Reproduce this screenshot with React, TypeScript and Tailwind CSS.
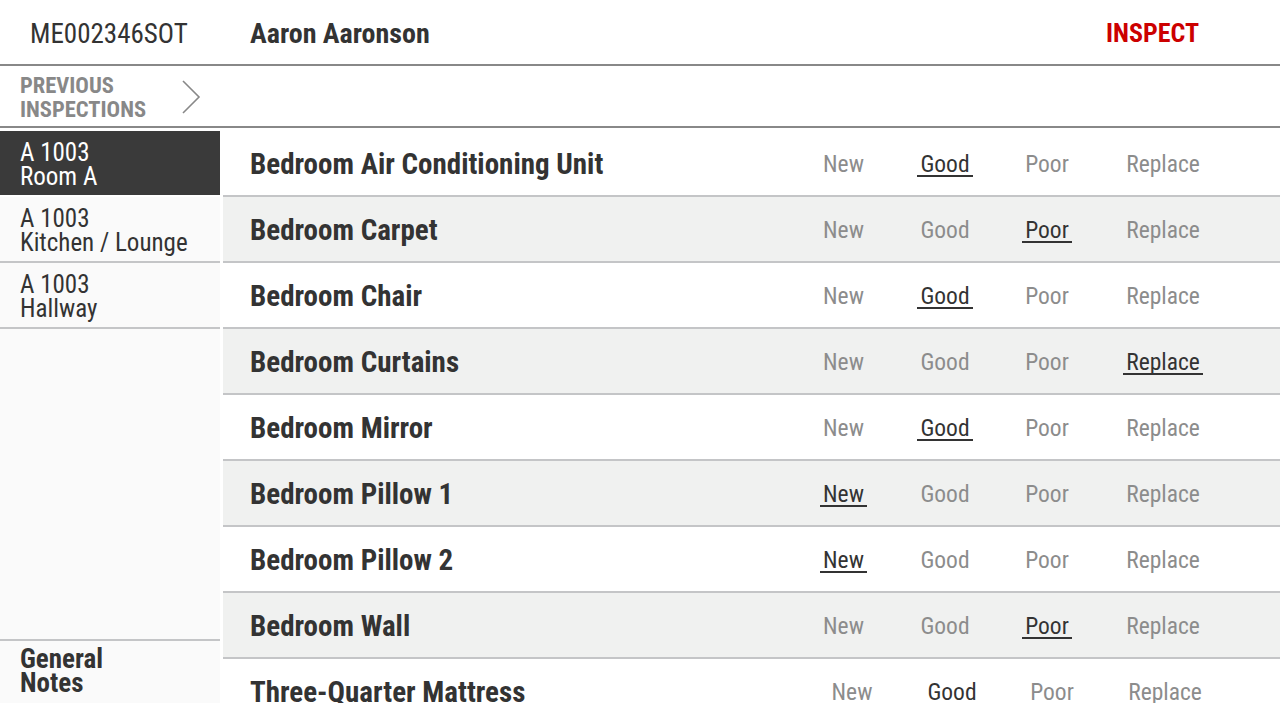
import React from 'react';

const FONT = '"Roboto Condensed", "Liberation Sans Narrow", "DejaVu Sans Condensed", "Liberation Sans", sans-serif';

const OPTIONS = ['New', 'Good', 'Poor', 'Replace'];

const items = [
  { name: 'Bedroom Air Conditioning Unit', value: 'Good' },
  { name: 'Bedroom Carpet', value: 'Poor' },
  { name: 'Bedroom Chair', value: 'Good' },
  { name: 'Bedroom Curtains', value: 'Replace' },
  { name: 'Bedroom Mirror', value: 'Good' },
  { name: 'Bedroom Pillow 1', value: 'New' },
  { name: 'Bedroom Pillow 2', value: 'New' },
  { name: 'Bedroom Wall', value: 'Poor' },
  { name: 'Three-Quarter Mattress', value: 'Good' },
];

const rooms = [
  { code: 'A 1003', name: 'Room A', active: true },
  { code: 'A 1003', name: 'Kitchen / Lounge' },
  { code: 'A 1003', name: 'Hallway' },
];

const WIDTHS = ['w-[101px]', 'w-[102px]', 'w-[102px]', 'w-[130px]'];
const WIDTHS_LAST = ['w-[100px]', 'w-[100px]', 'w-[100px]', 'w-[126px]'];

export default function App() {
  return (
    <div className="h-screen overflow-hidden bg-white text-[#333] flex flex-col" style={{ fontFamily: FONT }}>
      {/* Header */}
      <header className="h-[66px] shrink-0 flex items-center pt-[3px] border-b-2 border-[#888]">
        <span className="w-[250px] pl-[30px] text-[27px] mt-[2px]">ME002346SOT</span>
        <span className="text-[28px] font-bold">Aaron Aaronson</span>
        <span className="ml-auto mr-[81px] text-[26px] font-bold text-[#cc0000]">INSPECT</span>
      </header>

      {/* Previous inspections */}
      <div className="h-[62px] shrink-0 flex items-center border-b-2 border-[#888]">
        <div className="pl-[20px] w-[181px] mt-[1px] text-[22.5px] leading-[24px] font-bold text-[#888] uppercase">
          Previous<br />Inspections
        </div>
        <svg width="20" height="36" viewBox="0 0 20 36" className="mt-[2px]">
          <path d="M2 2 L18 18 L2 34" fill="none" stroke="#888" strokeWidth="1.6" />
        </svg>
      </div>

      <div className="flex flex-1 min-h-0 pt-[3px]">
        {/* Sidebar */}
        <aside className="w-[220px] shrink-0 bg-[#fafafa] flex flex-col">
          {rooms.map((r, i) => (
            <div
              key={i}
              className={
                'h-[66px] pl-[20px] pt-[3px] flex flex-col justify-center text-[25px] leading-[24px] border-b-2 ' +
                (r.active ? 'bg-[#3a3a3a] text-white border-white' : 'text-[#333] border-[#c4c5c7]')
              }
            >
              <span>{r.code}</span>
              <span>{r.name}</span>
            </div>
          ))}
          <div className="mt-auto h-[64px] pl-[20px] pt-[6px] border-t-2 border-[#c4c5c7] text-[27px] leading-[24px] font-bold">
            General<br />Notes
          </div>
        </aside>

        {/* Items */}
        <main className="flex-1 ml-[3px] flex flex-col">
          {items.map((it, i) => {
            const last = i === items.length - 1;
            const widths = last ? WIDTHS_LAST : WIDTHS;
            return (
              <div
                key={it.name}
                className={
                  'h-[66px] shrink-0 flex items-center border-b-2 border-[#c4c5c7] ' +
                  (i % 2 === 1 ? 'bg-[#f0f1f0]' : 'bg-white')
                }
              >
                <span className="pl-[27px] mt-[3px] text-[29px] font-bold">{it.name}</span>
                <div className="ml-auto flex pr-[52px] mt-[3px]">
                  {OPTIONS.map((o, j) => (
                    <div key={o} className={widths[j] + ' flex justify-center'}>
                      {it.value === o ? (
                        <span className="px-[3px] text-[23.5px] leading-[22px] text-[#333] border-b-2 border-[#333]">{o}</span>
                      ) : (
                        <span className="px-[3px] text-[23.5px] leading-[22px] text-[#8c8c8c] border-b-2 border-transparent">{o}</span>
                      )}
                    </div>
                  ))}
                </div>
              </div>
            );
          })}
        </main>
      </div>
    </div>
  );
}
